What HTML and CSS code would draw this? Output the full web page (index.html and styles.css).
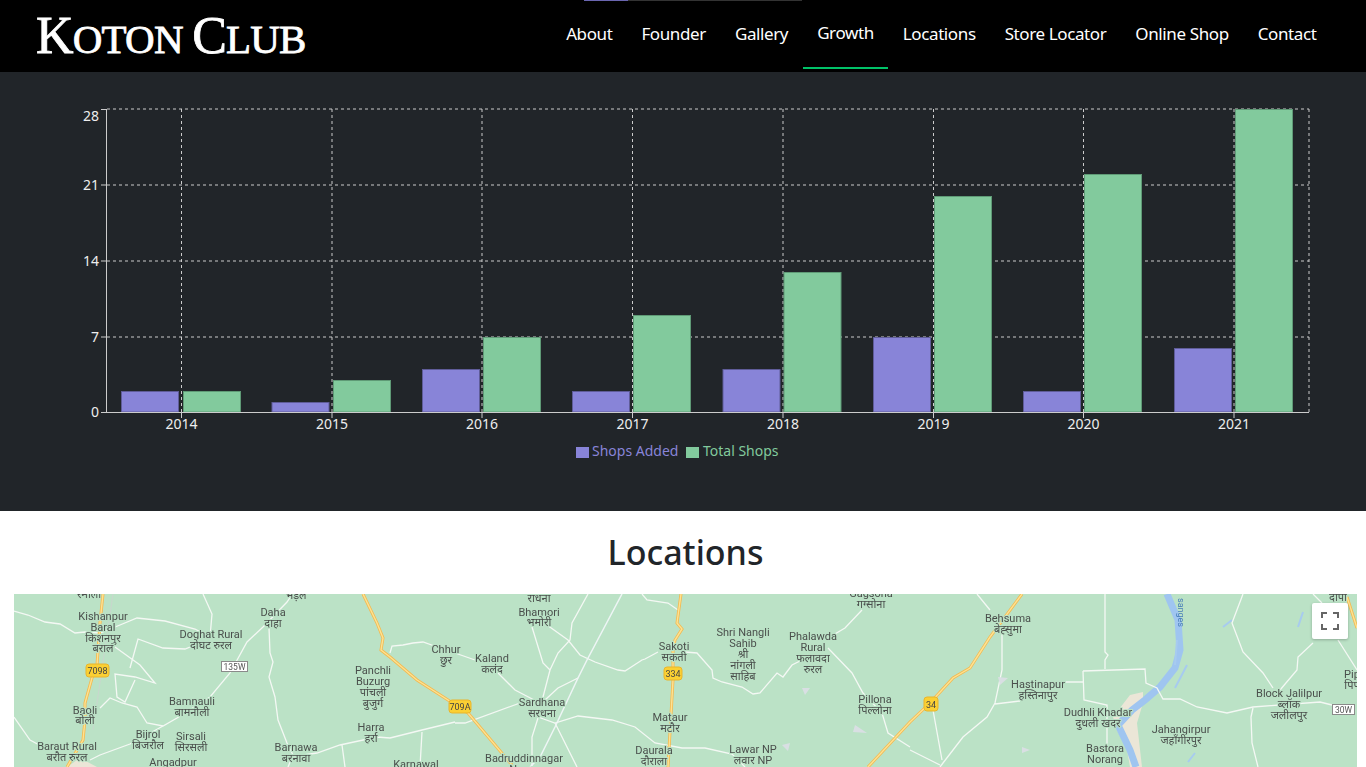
FILE: index.html
```html
<!DOCTYPE html>
<html lang="en">
<head>
	<meta charset="utf-8">
	<title>Koton Club</title>
	<link rel="stylesheet" href="styles.css">
</head>
<body>
	<div class="top-strip"><span class="strip-purple"></span><span class="strip-grey"></span></div>

	<nav class="navbar">
		<a class="brand" href="#"><span class="brand-cap">K</span>OTON <span class="brand-cap">C</span>LUB</a>
		<ul class="nav-links">
			<li><a href="#">About</a></li>
			<li><a href="#">Founder</a></li>
			<li><a href="#">Gallery</a></li>
			<li class="active"><a href="#">Growth</a></li>
			<li><a href="#">Locations</a></li>
			<li><a href="#">Store Locator</a></li>
			<li><a href="#">Online Shop</a></li>
			<li><a href="#">Contact</a></li>
		</ul>
	</nav>

	<section class="growth">
		<svg class="chart" viewBox="0 72 1366 439" width="1366" height="439">
			<g class="grid">
				<path d="M107 109H1309M107 185H1309M107 261H1309M107 337H1309"/>
				<path d="M181.5 109V412M332 109V412M482 109V412M632.500 109V412M783 109V412M933.500 109V412M1083.500 109V412M1234 109V412M1309 109V412"/>
			</g>
			<g class="bars-added">
				<rect x="121.500" y="391.500" width="57" height="20.500"/>
				<rect x="272" y="402.500" width="57" height="9.500"/>
				<rect x="422.500" y="369.500" width="57" height="42.500"/>
				<rect x="572.500" y="391.500" width="57" height="20.500"/>
				<rect x="723" y="369.500" width="57" height="42.500"/>
				<rect x="873.500" y="337.500" width="57" height="74.500"/>
				<rect x="1023.500" y="391.500" width="57" height="20.500"/>
				<rect x="1174.500" y="348.500" width="57" height="63.500"/>
			</g>
			<g class="bars-total">
				<rect x="183.500" y="391.500" width="57" height="20.500"/>
				<rect x="333.500" y="380.500" width="57" height="31.500"/>
				<rect x="483.500" y="337.500" width="57" height="74.500"/>
				<rect x="633.500" y="315.500" width="57" height="96.500"/>
				<rect x="784" y="272.500" width="57" height="139.500"/>
				<rect x="934.500" y="196.500" width="57" height="215.500"/>
				<rect x="1084.500" y="174.500" width="57" height="237.500"/>
				<rect x="1235.500" y="109.500" width="57" height="302.500"/>
			</g>
			<g class="axis">
				<path d="M106.500 109V412.500H1309"/>
				<path d="M101 109.500H107M101 185H107M101 261H107M101 337H107M101 412.500H107"/>
				<path d="M181.500 412V418M332 412V418M482 412V418M632.500 412V418M783 412V418M933.500 412V418M1083.500 412V418M1234 412V418"/>
			</g>
			<g class="ticks-y">
				<text x="99" y="121">28</text>
				<text x="99" y="190">21</text>
				<text x="99" y="266">14</text>
				<text x="99" y="342">7</text>
				<text x="99" y="417">0</text>
			</g>
			<g class="ticks-x">
				<text x="181.500" y="429">2014</text>
				<text x="332" y="429">2015</text>
				<text x="482" y="429">2016</text>
				<text x="632.500" y="429">2017</text>
				<text x="783" y="429">2018</text>
				<text x="933.500" y="429">2019</text>
				<text x="1083.500" y="429">2020</text>
				<text x="1234" y="429">2021</text>
			</g>
			<g class="legend">
				<rect class="key-added" x="576" y="447" width="13" height="11"/>
				<text class="label-added" x="592" y="456">Shops Added</text>
				<rect class="key-total" x="686" y="447" width="13" height="11"/>
				<text class="label-total" x="703" y="456">Total Shops</text>
			</g>
		</svg>
	</section>

	<section class="locations">
		<h2>Locations</h2>
		<div class="map">
			<svg class="map-canvas" viewBox="14 594 1343 173" width="1343" height="173">
				<path class="sand" d="M1143 692 1130 695 1113 717 1117 730 1127 750 1130 767H1142L1137 723 1143 703ZM67 767 80 758 97 767Z"/>
				<path class="river" d="M1167 594 1178 620 1180 650 1175 668 1160 687 1145 700 1132 710 1118 725 1130 750 1136 767"/>
				<path class="stream" d="M1177 640 1175 665M1187 665 1175 688M1223 627 1232 620M1298 627 1303 612M1188 762 1195 753"/>
				<path class="rail" d="M113 594 93 730"/>
				<g class="minor">
					<path d="M14 611 28 615 45 622 60 624 75 633 85 632 100 633 120 625 137 618 165 621 195 629 210 637M203 594 212 614 210 637"/>
					<path d="M130 668 138 639 163 648 185 649 195 645"/>
					<path d="M115 647 140 665 155 683 135 677 115 674 117 697 125 702 135 680"/>
					<path d="M100 708 110 698 122 703 137 707 147 723 163 726 177 718 210 697 230 673 247 642 263 627 287 602 291 596"/>
					<path d="M269 628 270 653 273 662 269 677 275 697 278 720 287 743 293 755 288 767"/>
					<path d="M14 717 30 740 43 747M455 722 422 730 390 738 377 737 340 745 317 753 290 757M163 726 130 744 100 755 90 760"/>
					<path d="M342 745 345 767M422 732 420 767M390 653 392 646 403 645 413 643 423 642 440 648"/>
					<path d="M455 653 475 660M498 673 515 690 538 702M455 723 465 723 520 703"/>
					<path d="M588 594 572 623 570 640 558 653 550 670 543 697M532 627 543 663 550 670"/>
					<path d="M547 625 568 640 580 655 595 662 618 670 625 671 642 660 645 659 658 652"/>
					<path d="M685 652 697 653 712 670 713 678 722 682 742 687 753 694 760 693 777 673 783 677 792 665 802 660"/>
					<path d="M578 678 558 688 545 700M538 717 555 723 578 716 612 720 635 727 655 743 682 748 705 748 732 754 745 767"/>
					<path d="M555 723 577 767M538 718 532 737 532 767M642 594 647 600 668 603 678 610"/>
					<path d="M828 648 852 673 863 693 882 713 888 733 910 747M862 610 845 628 828 638"/>
					<path d="M977 594 990 610M1002 633 1002 670 995 703 987 717 963 737 943 763 940 767M995 704 1020 701"/>
					<path d="M933 710 942 760M910 750 940 765M1065 682H1083"/>
					<path d="M1083 671 1145 669 1146 683 1157 688 1163 699 1180 699 1197 707 1227 713 1253 707 1320 702 1332 705"/>
					<path d="M1083 671 1084 700 1107 705 1107 747M1105 594 1105 652 1108 655 1105 660 1105 669"/>
					<path d="M1253 708 1251 717 1252 743 1258 767M1243 594 1232 623 1243 652 1263 673 1273 688"/>
					<path d="M1280 690 1297 670 1298 657 1313 643M1338 640 1357 670M1313 594 1322 603"/>
				</g>
				<path class="railway" d="M622 594 587 660 578 678 555 727 540 757 530 767"/>
				<g class="highway">
					<path d="M103 594 100 623 97 665 92 678 85 703 85 720 83 740 67 767M363 594 377 623 383 638 381 650 390 657 417 680 448 700 468 713 512 765M681 594 677 623 682 629 675 640 673 650 673 680 668 767M1022 594 990 637 970 668 953 678 930 703 910 722 868 767M1347 597 1357 628"/>
				</g>
				<g class="highway-inner">
					<path d="M103 594 100 623 97 665 92 678 85 703 85 720 83 740 67 767M363 594 377 623 383 638 381 650 390 657 417 680 448 700 468 713 512 765M681 594 677 623 682 629 675 640 673 650 673 680 668 767M1022 594 990 637 970 668 953 678 930 703 910 722 868 767M1347 597 1357 628"/>
				</g>
				<path class="marker" d="M802 688 810 688 805 695ZM855 725 867 733 853 732ZM782 745 790 743 788 751ZM998 677 1008 678 1000 685ZM1022 747 1030 750 1022 753Z"/>

				<g class="shield">
					<rect x="86" y="664" width="23" height="13" rx="3"/>
					<rect x="449" y="700" width="22" height="13" rx="3"/>
					<rect x="664" y="667" width="18" height="13" rx="3"/>
					<rect x="924" y="697" width="14" height="14" rx="3"/>
				</g>
				<g class="shield-text">
					<text x="97.500" y="674">7098</text>
					<text x="460" y="710">709A</text>
					<text x="673" y="677">334</text>
					<text x="931" y="708">34</text>
				</g>
				<g class="route">
					<rect x="221.500" y="661.500" width="26" height="10"/>
					<rect x="1332.500" y="704.500" width="22" height="10"/>
				</g>
				<g class="route-text">
					<text x="234.500" y="670">135W</text>
					<text x="1343.500" y="713">30W</text>
				</g>

				<text class="river-name" transform="translate(1178 598) rotate(90)">sanges</text>

				<g class="place">
					<text x="89" y="598">रमाला</text>
					<text x="103" y="620">Kishanpur</text>
					<text x="103" y="631">Baral</text>
					<text x="103" y="642">किशनपुर</text>
					<text x="103" y="652">बराल</text>
					<text x="211" y="638">Doghat Rural</text>
					<text x="211" y="649">दोघट रुरल</text>
					<text x="273" y="616">Daha</text>
					<text x="273" y="627">दाहा</text>
					<text x="296" y="599">भड़ल</text>
					<text x="373" y="674">Panchli</text>
					<text x="373" y="685">Buzurg</text>
					<text x="373" y="696">पांचली</text>
					<text x="373" y="707">बुजुर्ग</text>
					<text x="446" y="653">Chhur</text>
					<text x="446" y="664">छुर</text>
					<text x="192" y="705">Bamnauli</text>
					<text x="192" y="716">बामनौली</text>
					<text x="85" y="714">Baoli</text>
					<text x="85" y="724">बोली</text>
					<text x="148" y="738">Bijrol</text>
					<text x="148" y="749">बिजरौल</text>
					<text x="191" y="740">Sirsali</text>
					<text x="191" y="751">सिरसली</text>
					<text x="67" y="750">Baraut Rural</text>
					<text x="67" y="761">बरौत रुरल</text>
					<text x="173" y="766">Angadpur</text>
					<text x="371" y="731">Harra</text>
					<text x="371" y="742">हर्रा</text>
					<text x="296" y="751">Barnawa</text>
					<text x="296" y="762">बरनावा</text>
					<text x="416" y="768">Karnawal</text>
					<text x="539" y="602">राधना</text>
					<text x="539" y="616">Bhamori</text>
					<text x="539" y="626">भमोरी</text>
					<text x="492" y="662">Kaland</text>
					<text x="492" y="673">कलंद</text>
					<text x="674" y="650">Sakoti</text>
					<text x="674" y="661">सकती</text>
					<text x="743" y="636">Shri Nangli</text>
					<text x="743" y="647">Sahib</text>
					<text x="743" y="658">श्री</text>
					<text x="743" y="669">नांगली</text>
					<text x="743" y="680">साहिब</text>
					<text x="813" y="640">Phalawda</text>
					<text x="813" y="651">Rural</text>
					<text x="813" y="662">फलावदा</text>
					<text x="813" y="673">रुरल</text>
					<text x="871" y="597">Gagsona</text>
					<text x="871" y="608">गग्सोना</text>
					<text x="542" y="706">Sardhana</text>
					<text x="542" y="717">सरधना</text>
					<text x="670" y="721">Mataur</text>
					<text x="670" y="732">मटौर</text>
					<text x="875" y="703">Pillona</text>
					<text x="875" y="714">पिल्लोना</text>
					<text x="654" y="754">Daurala</text>
					<text x="654" y="765">दौराला</text>
					<text x="753" y="753">Lawar NP</text>
					<text x="753" y="764">लवार NP</text>
					<text x="524" y="762">Badruddinnagar</text>
					<text x="524" y="773">Nagar</text>
					<text x="1008" y="622">Behsuma</text>
					<text x="1008" y="633">बेह्सुमा</text>
					<text x="1038" y="688">Hastinapur</text>
					<text x="1038" y="699">हस्तिनापुर</text>
					<text x="1098" y="716">Dudhli Khadar</text>
					<text x="1098" y="727">दुधली खदर</text>
					<text x="1181" y="733">Jahangirpur</text>
					<text x="1181" y="744">जहाँगीरपुर</text>
					<text x="1105" y="752">Bastora</text>
					<text x="1105" y="763">Norang</text>
					<text x="1289" y="697">Block Jalilpur</text>
					<text x="1289" y="708">ब्लॉक</text>
					<text x="1289" y="719">जलीलपुर</text>
					<text x="1352" y="678">Pip</text>
					<text x="1352" y="689">पिप</text>
					<text x="1338" y="601">दीपां</text>
				</g>
			</svg>
			<button class="fullscreen" type="button" aria-label="Toggle fullscreen view">
				<svg viewBox="0 0 18 18" width="18" height="18"><path d="M1 6V1H6M12 1H17V6M17 12V17H12M6 17H1V12"/></svg>
			</button>
		</div>
	</section>
</body>
</html>
```

FILE: styles.css
```css
html, body {
	margin: 0;
	height: 767px;
	overflow: hidden;
}
body {
	position: relative;
	font-family: "Noto Sans", "Open Sans", sans-serif;
	background-color: white;
}
.top-strip {
	position: absolute;
	top: 0;
	left: 584px;
	display: flex;
	height: 1px;
}
.strip-purple {
	width: 44px;
	background-color: #6a66b0;
}
.strip-grey {
	width: 174px;
	background-color: #333;
}
.navbar {
	display: flex;
	align-items: center;
	justify-content: space-between;
	height: 72px;
	padding: 0 35px 0 36px;
	box-sizing: border-box;
	background-color: black;
}
.brand {
	margin-bottom: 1px;
	font-family: "Liberation Serif", serif;
	font-size: 41px;
	letter-spacing: -0.8px;
	color: white;
	text-decoration: none;
	-webkit-text-stroke: 0.8px white;
}
.brand-cap {
	font-size: 52px;
}
.nav-links {
	display: flex;
	align-self: stretch;
	margin: 0;
	padding: 0;
	list-style: none;
}
.nav-links li {
	display: flex;
	align-items: center;
	height: 66px;
	padding: 0 14.5px;
	box-sizing: border-box;
}
.nav-links a {
	font-size: 17px;
	letter-spacing: -0.39px;
	color: white;
	text-decoration: none;
}
.nav-links .active {
	height: 69px;
	padding-bottom: 3px;
	border-bottom: 2px solid #00c268;
}
.growth {
	height: 439px;
	background-color: #212529;
}
.chart {
	display: block;
}
.grid path {
	fill: none;
	stroke: #ccc;
	stroke-dasharray: 3 3;
}
.bars-added rect {
	fill: #8884d8;
	stroke: #5f5c98;
}
.bars-total rect {
	fill: #82ca9d;
	stroke: #5f9a76;
}
.axis path {
	fill: none;
	stroke: #ccc;
}
.ticks-y text, .ticks-x text {
	font-size: 14px;
	fill: #eee;
}
.ticks-y text {
	text-anchor: end;
}
.ticks-x text {
	text-anchor: middle;
}
.legend text {
	font-size: 14px;
}
.key-added {
	fill: #8884d8;
}
.key-total {
	fill: #82ca9d;
}
.label-added {
	fill: #8884d8;
}
.label-total {
	fill: #82ca9d;
}
.locations h2 {
	margin: 0;
	height: 83px;
	padding: 17px 0 0 5px;
	box-sizing: border-box;
	font-size: 34px;
	font-weight: 500;
	line-height: 48px;
	text-align: center;
	color: #212529;
}
.map {
	position: relative;
	height: 173px;
	margin: 0 9px 0 14px;
	overflow: hidden;
	background-color: #bbe2c6;
}
.map-canvas {
	display: block;
	filter: blur(0.35px);
}
.map-canvas path {
	fill: none;
}
.map-canvas .sand {
	fill: #ebe6d7;
}
.map-canvas .marker {
	fill: #d9dfe3;
}
.river {
	stroke: #9fc5f0;
	stroke-width: 7;
}
.stream {
	stroke: #a7cbef;
	stroke-width: 2;
}
.rail {
	stroke: #c9d6cd;
}
.minor path {
	stroke: #f4f8f4;
	stroke-width: 1.3;
}
.railway {
	stroke: #eef5f5;
	stroke-width: 1.5;
}
.highway path {
	stroke: #f3b94f;
	stroke-width: 3;
}
.highway-inner path {
	stroke: #fde293;
	stroke-width: 1.4;
}
.shield rect {
	fill: #fbd033;
	stroke: #e9b52d;
}
.shield-text text {
	font-family: Roboto, sans-serif;
	font-size: 9px;
	text-anchor: middle;
	fill: #444;
}
.route rect {
	fill: white;
	stroke: #8a8a8a;
}
.route-text text {
	font-family: Roboto, sans-serif;
	font-size: 8.5px;
	text-anchor: middle;
	fill: #555;
}
.river-name {
	font-family: Roboto, sans-serif;
	font-size: 9px;
	fill: #4a7fb8;
}
.place text {
	font-family: Roboto, "Noto Sans", sans-serif;
	font-size: 11px;
	text-anchor: middle;
	fill: #4a4f4c;
	stroke: #bbe2c6;
	stroke-width: 2px;
	paint-order: stroke;
}
.fullscreen {
	position: absolute;
	top: 9px;
	right: 9px;
	display: flex;
	align-items: center;
	justify-content: center;
	width: 36px;
	height: 36px;
	padding: 0;
	border: none;
	border-radius: 2px;
	background-color: white;
	box-shadow: 0 1px 3px rgba(0, 0, 0, 0.25);
}
.fullscreen path {
	fill: none;
	stroke: #666;
	stroke-width: 2;
}
```
